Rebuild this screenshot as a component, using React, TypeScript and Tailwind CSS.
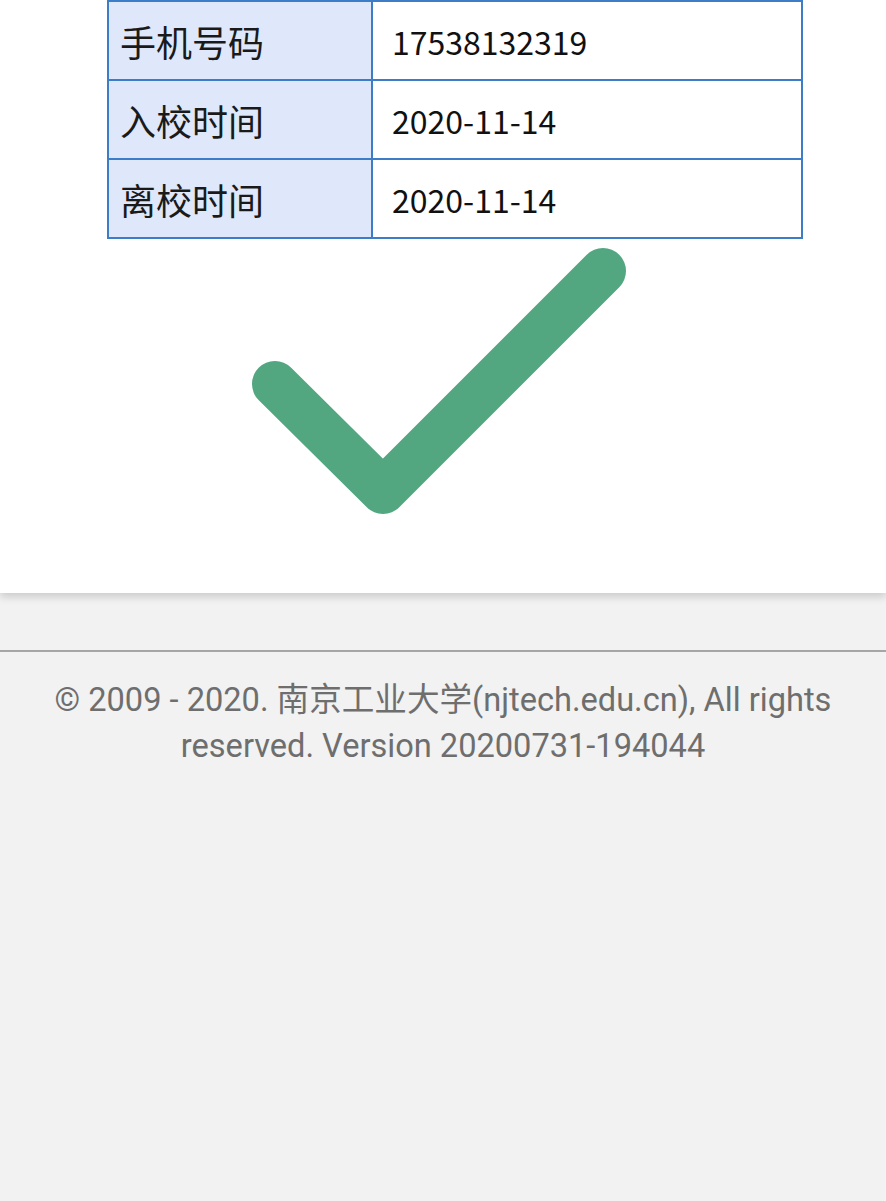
const ROWS = [
  { label: '手机号码', value: '17538132319' },
  { label: '入校时间', value: '2020-11-14' },
  { label: '离校时间', value: '2020-11-14' },
]

function CheckMark() {
  return (
    <svg width="400" height="290" viewBox="0 0 400 290" className="block ml-[240px] mt-[2px]">
      <path
        d="M35 143 L143 250 L363 30"
        fill="none"
        stroke="#52a680"
        strokeWidth="46"
        strokeLinecap="round"
        strokeLinejoin="round"
      />
    </svg>
  )
}

export default function App() {
  return (
    <div className="min-h-[1201px] bg-[#f2f2f2]" style={{ fontFamily: 'Roboto, "Noto Sans CJK SC", sans-serif' }}>
      <div className="bg-white pb-[62px] shadow-[0_4px_8px_rgba(0,0,0,0.16)]">
        <table className="ml-[107px] w-[696px] border-collapse">
          <tbody>
            {ROWS.map((row) => (
              <tr key={row.label} className="h-[79px]">
                <td
                  className="w-[264px] border-2 border-[#3d7dc8] bg-[#dfe8fa] pl-[11px] text-[36px] text-[#1a1a1a]"
                  style={{ fontFamily: '"Noto Sans CJK SC", sans-serif' }}
                >
                  {row.label}
                </td>
                <td
                  className="border-2 border-[#3d7dc8] pl-[19px] text-[32px] text-[#111]"
                  style={{ fontFamily: '"Noto Sans CJK SC", sans-serif' }}
                >
                  {row.value}
                </td>
              </tr>
            ))}
          </tbody>
        </table>
        <CheckMark />
      </div>

      <div className="mt-[57px] border-t-2 border-[#a6a6a6] pt-[25px] text-center text-[32.6px] leading-[46px] text-[#6e6e6e]">
        <div className="whitespace-nowrap">© 2009 - 2020. 南京工业大学(njtech.edu.cn), All rights</div>
        <div className="whitespace-nowrap">reserved. Version 20200731-194044</div>
      </div>
    </div>
  )
}
